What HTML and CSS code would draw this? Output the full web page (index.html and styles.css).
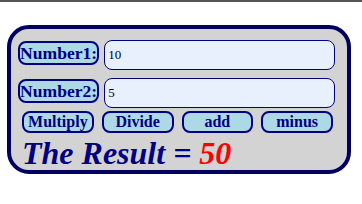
FILE: index.html
```html
<!DOCTYPE html>
<html>
<head>
<meta charset="utf-8">
<link rel="stylesheet" href="styles.css">
</head>
<body>
<div class="topline"></div>
<div class="calc">
  <div class="row">
    <label class="lbl" for="n1">Number1:</label>
    <input class="num" id="n1" type="text" value="10">
  </div>
  <div class="row">
    <label class="lbl" for="n2">Number2:</label>
    <input class="num" id="n2" type="text" value="5">
  </div>
  <div class="buttons">
    <button class="btn">Multiply</button>
    <button class="btn">Divide</button>
    <button class="btn">add</button>
    <button class="btn">minus</button>
  </div>
  <div class="result">The Result = <span class="value">50</span></div>
</div>
</body>
</html>
```

FILE: styles.css
```css
html, body {
  margin: 0;
  padding: 0;
  background: #ffffff;
  font-family: "Liberation Serif", "Times New Roman", serif;
}

.topline {
  height: 2px;
  background: #555555;
}

.calc {
  box-sizing: border-box;
  margin: 23px 11px 0 7px;
  height: 149px;
  background: #d3d3d3;
  border: 4px solid #000060;
  border-radius: 22px;
  padding: 11px 12px 0 7px;
  display: flex;
  flex-direction: column;
}

.row {
  display: flex;
  align-items: flex-start;
  gap: 5px;
  margin-bottom: 8px;
}

.row + .row {
  margin-bottom: 3px;
}

.lbl {
  box-sizing: border-box;
  margin-top: 1px;
  height: 24px;
  padding: 0;
  background: #add8e6;
  border: 2px solid #000080;
  border-radius: 8px;
  color: #000080;
  font-weight: bold;
  font-size: 17.6px;
  line-height: 20px;
  white-space: nowrap;
}

.num {
  box-sizing: border-box;
  flex: 1;
  min-width: 0;
  height: 30px;
  margin: 0;
  padding: 0 3px;
  background: #e8f0fe;
  border: 1px solid #000080;
  border-radius: 8px;
  font-family: "Liberation Serif", "Times New Roman", serif;
  font-size: 13px;
  color: #000000;
  outline: none;
}

.buttons {
  display: flex;
  gap: 8px;
  padding: 0 2px 0 4px;
}

.btn {
  box-sizing: border-box;
  flex: 1;
  height: 22px;
  margin: 0;
  padding: 0;
  background: #add8e6;
  border: 2px solid #000080;
  border-radius: 8px;
  color: #000080;
  font-family: "Liberation Serif", "Times New Roman", serif;
  font-weight: bold;
  font-size: 16px;
  line-height: 18px;
}

.result {
  margin-top: 3px;
  padding-left: 4px;
  color: #000080;
  font-weight: bold;
  font-style: italic;
  font-size: 32px;
  line-height: 34px;
  white-space: nowrap;
}

.value {
  color: #ff0000;
}
```
